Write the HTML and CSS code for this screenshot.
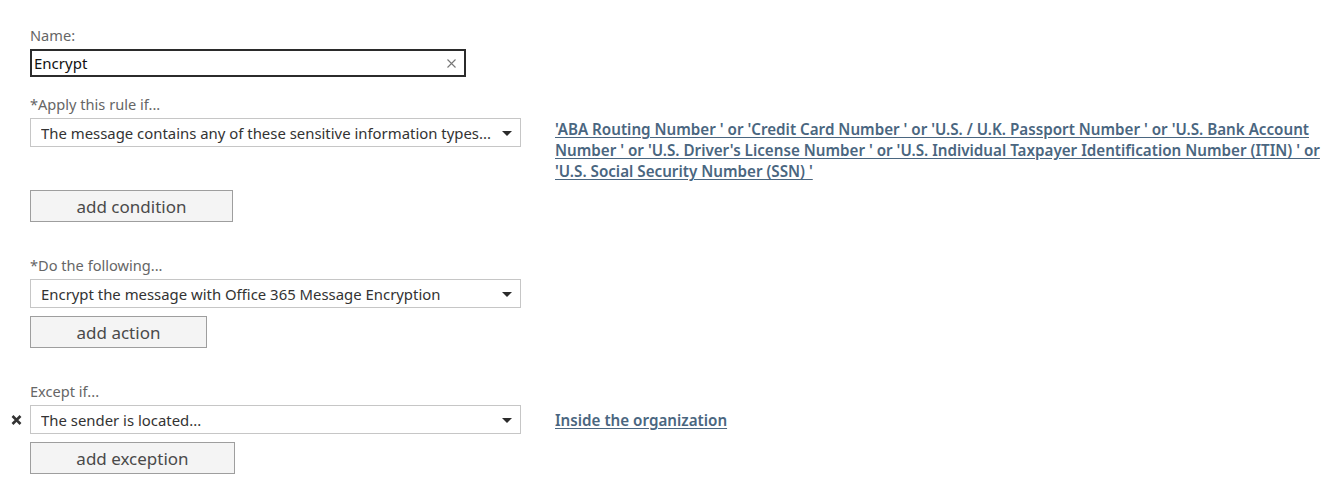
FILE: index.html
```html
<!DOCTYPE html>
<html lang="en">
<head>
<meta charset="utf-8">
<title>Rule</title>
<link rel="stylesheet" href="styles.css">
</head>
<body>
<div class="form">
  <div class="label">Name:</div>
  <div class="row">
    <div class="gutter"></div>
    <div class="textbox">
      <span class="textbox-value">Encrypt</span>
      <svg class="clear" width="9" height="9" viewBox="0 0 9 9"><path d="M0.5 0.5 L8.5 8.5 M8.5 0.5 L0.5 8.5" stroke="#777" stroke-width="1.1" fill="none"/></svg>
    </div>
  </div>

  <div class="label gap-s">*Apply this rule if...</div>
  <div class="row">
    <div class="gutter"></div>
    <div class="select">
      <span class="select-value">The message contains any of these sensitive information types...</span>
      <span class="arrow"></span>
    </div>
    <a class="detail" href="#">'ABA Routing Number ' or 'Credit Card Number ' or 'U.S. / U.K. Passport Number ' or 'U.S. Bank Account Number ' or 'U.S. Driver's License Number ' or 'U.S. Individual Taxpayer Identification Number (ITIN) ' or 'U.S. Social Security Number (SSN) '</a>
  </div>
  <div class="row btn-row">
    <div class="gutter"></div>
    <button class="btn btn-condition">add condition</button>
  </div>

  <div class="label gap-l">*Do the following...</div>
  <div class="row">
    <div class="gutter"></div>
    <div class="select">
      <span class="select-value">Encrypt the message with Office 365 Message Encryption</span>
      <span class="arrow"></span>
    </div>
  </div>
  <div class="row btn-row">
    <div class="gutter"></div>
    <button class="btn btn-action">add action</button>
  </div>

  <div class="label gap-l">Except if...</div>
  <div class="row">
    <div class="gutter">
      <svg class="remove" width="11" height="10" viewBox="0 0 11 10"><path d="M1.5 1 L9.5 9 M9.5 1 L1.5 9" stroke="#333" stroke-width="2.6" fill="none"/></svg>
    </div>
    <div class="select">
      <span class="select-value">The sender is located...</span>
      <span class="arrow"></span>
    </div>
    <a class="detail detail-single" href="#">Inside the organization</a>
  </div>
  <div class="row btn-row">
    <div class="gutter"></div>
    <button class="btn btn-exception">add exception</button>
  </div>
</div>
</body>
</html>
```

FILE: styles.css
```css
html, body {
  margin: 0;
  padding: 0;
  background: #ffffff;
}

body {
  font-family: "Noto Sans", "Open Sans", "Liberation Sans", sans-serif;
  color: #333333;
}

.form {
  padding-top: 26px;
  display: flex;
  flex-direction: column;
}

.label {
  margin-left: 30px;
  font-size: 14.6px;
  line-height: 18px;
  color: #666666;
}

.gap-s {
  margin-top: 17px;
}

.gap-l {
  margin-top: 34px;
}

.row {
  display: flex;
  align-items: flex-start;
  margin-top: 5px;
}

.gutter {
  width: 30px;
  height: 29px;
  flex: none;
  display: flex;
  align-items: center;
  justify-content: center;
  padding-left: 3px;
  box-sizing: border-box;
}

.textbox {
  width: 436px;
  height: 28px;
  box-sizing: border-box;
  border: 2px solid #2b2b2b;
  display: flex;
  align-items: center;
  padding: 0 8px 0 2px;
}

.textbox-value {
  flex: 1;
  font-size: 15px;
  color: #111111;
}

.select {
  width: 491px;
  height: 29px;
  box-sizing: border-box;
  border: 1px solid #c6c6c6;
  display: flex;
  align-items: center;
  padding: 0 8px 0 10px;
  flex: none;
}

.select-value {
  flex: 1;
  font-size: 14.9px;
  color: #333333;
  white-space: nowrap;
  overflow: hidden;
}

.arrow {
  width: 0;
  height: 0;
  border-left: 5px solid transparent;
  border-right: 5px solid transparent;
  border-top: 5px solid #2b2b2b;
  margin-top: 2px;
}

.detail {
  margin-left: 34px;
  width: 765px;
  padding-top: 1px;
  font-size: 15.2px;
  line-height: 21px;
  font-weight: 600;
  color: #4a6680;
  text-decoration: underline;
  text-underline-offset: 2px;
}

.detail.detail-single {
  padding-top: 5px;
}

.btn-row {
  margin-top: 8px;
}

.btn {
  height: 32px;
  box-sizing: border-box;
  background: #f4f4f4;
  border: 1px solid #9e9e9e;
  font-family: inherit;
  font-size: 17px;
  color: #4a4a4a;
  padding: 0;
  cursor: pointer;
}

.btn-condition {
  width: 203px;
}

.btn-action {
  width: 177px;
}

.btn-exception {
  width: 205px;
}
```
